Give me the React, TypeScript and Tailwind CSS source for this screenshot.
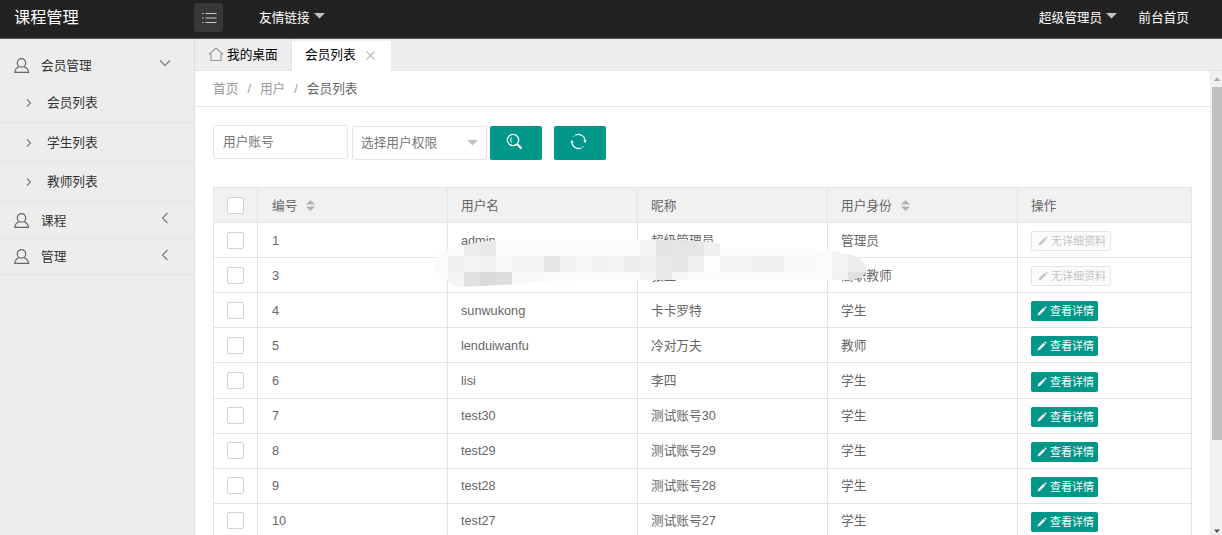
import React from "react";

type Row = { id: number; user: string; nick: string; role: string; disabled?: boolean };

const rows: Row[] = [
  { id: 1, user: "admin", nick: "超级管理员", role: "管理员", disabled: true },
  { id: 3, user: "", nick: "张三", role: "高职教师", disabled: true },
  { id: 4, user: "sunwukong", nick: "卡卡罗特", role: "学生" },
  { id: 5, user: "lenduiwanfu", nick: "冷对万夫", role: "教师" },
  { id: 6, user: "lisi", nick: "李四", role: "学生" },
  { id: 7, user: "test30", nick: "测试账号30", role: "学生" },
  { id: 8, user: "test29", nick: "测试账号29", role: "学生" },
  { id: 9, user: "test28", nick: "测试账号28", role: "学生" },
  { id: 10, user: "test27", nick: "测试账号27", role: "学生" },
];

function UserIcon() {
  return (
    <svg width="16" height="16" viewBox="0 0 16 16" fill="none" stroke="#666" strokeWidth="1.2" className="shrink-0">
      <ellipse cx="7.500" cy="4.900" rx="4.200" ry="4.300" />
      <path d="M5.300 8.500C2.500 9.600 1 11.400.8 14.300H14.500C14.300 11.400 12.500 9.600 9.700 8.500" />
    </svg>
  );
}

function Chevron({ d, className }: { d: string; className?: string }) {
  return (
    <svg width="12" height="12" viewBox="0 0 12 12" fill="none" stroke="#777" strokeWidth="1.1" className={className}>
      <path d={d} />
    </svg>
  );
}

function Caret({ fill }: { fill: string }) {
  return (
    <svg width="11" height="6" viewBox="0 0 11 6" fill={fill}>
      <path d="M0 0H11L5.500 5.500Z" />
    </svg>
  );
}

function Sort() {
  return (
    <svg width="9" height="11" viewBox="0 0 9 11" fill="#b2b2b2" className="ml-[9px]">
      <path d="M0 4.500L4.500 0L9 4.500ZM0 6.500H9L4.500 11Z" />
    </svg>
  );
}

function Pencil() {
  return (
    <svg width="10" height="10" viewBox="0 0 10 10" fill="currentColor" className="mr-[3px] shrink-0">
      <path d="M0.500 9.500L1.300 7L6.600 1.700L8.300 3.400L3 8.700ZM7.200 1.100L7.800.5Q8.300.2 8.800.7L9.400 1.300Q9.800 1.800 9.400 2.300L8.900 2.800Z" />
    </svg>
  );
}

function Check() {
  return <span className="-mt-px block h-[17px] w-[17px] rounded-[2px] border border-[#d2d2d2] bg-white" />;
}

function SubItem({ label, height }: { label: string; height: string }) {
  return (
    <div className={`flex items-center border-b border-[#e3e3e3] pl-[23px] ${height}`}>
      <Chevron d="M4 2.500L7.500 6L4 9.500" />
      <span className="ml-3">{label}</span>
    </div>
  );
}

function Group({ label, height }: { label: string; height: string }) {
  return (
    <div className={`flex items-center border-b border-[#e3e3e3] pl-[14px] pr-[23px] ${height}`}>
      <UserIcon />
      <span className="ml-[11px] flex-1">{label}</span>
      <Chevron d="M8.500 1L3.500 6L8.500 11" className="mb-[5px]" />
    </div>
  );
}

const mosaic: [number, number, number, number, string][] = [
  [430, 235, 440, 60, "#fbfbfb"],
  [448, 256, 16, 16, "#efefef"], [464, 256, 16, 16, "#f5f5f5"], [480, 256, 16, 16, "#f1f1f1"],
  [496, 256, 16, 16, "#fafafa"], [512, 256, 32, 16, "#f3f3f3"], [544, 256, 16, 16, "#e6e6e6"],
  [560, 256, 16, 16, "#f1f1f1"], [576, 256, 16, 16, "#f6f6f6"], [592, 256, 16, 16, "#f1f1f1"],
  [608, 256, 16, 16, "#f4f4f4"], [624, 256, 16, 16, "#eeeeee"], [640, 256, 16, 16, "#f0f0f0"],
  [656, 256, 16, 16, "#e9e9e8"], [672, 256, 16, 16, "#e5e8e6"], [688, 256, 16, 16, "#eeefee"],
  [704, 256, 16, 16, "#fdfdfd"], [720, 256, 32, 16, "#f3f3f3"], [752, 256, 32, 16, "#f0f0f0"],
  [784, 256, 32, 16, "#f9f9f9"], [832, 256, 16, 16, "#f5f5f5"], [848, 256, 20, 16, "#ededed"],
  [448, 272, 16, 16, "#f5f5f3"], [464, 272, 16, 16, "#e1e1e1"], [480, 272, 16, 16, "#dadcda"],
  [496, 272, 16, 16, "#dddddd"], [512, 272, 32, 16, "#f8f8f8"], [640, 272, 16, 16, "#f4f4f4"],
  [656, 272, 16, 16, "#e8e8e6"], [672, 272, 16, 16, "#f6f6f6"], [832, 272, 16, 16, "#f1f1ef"],
  [848, 272, 20, 16, "#e1e1e1"], [464, 240, 16, 16, "#eceeed"], [480, 240, 16, 16, "#e9e9e9"],
  [640, 240, 16, 16, "#f5f5f3"], [656, 240, 16, 16, "#e3e3e3"], [672, 240, 32, 16, "#e4e6e5"],
  [704, 240, 16, 16, "#eff1f0"], [832, 240, 16, 16, "#f4f4f2"], [848, 240, 16, 16, "#eaeaea"],
];

const cell = "flex items-center border-r border-b border-[#e4e4e4] pl-[13px] pt-px";
const idCell = "flex items-center border-r border-b border-[#e4e4e4] pl-[14px] pt-px";

export default function App() {
  return (
    <div className="relative flex h-[535px] w-[1222px] flex-col overflow-hidden bg-white font-['Liberation_Sans','Noto_Sans_CJK_SC',sans-serif] text-[12.700px] leading-[18px] text-[#666]">
      <header className="flex h-[39px] shrink-0 items-center border-b border-[#5a5555] bg-[#222] pb-1 text-white">
        <div className="w-[194px] pl-[14px] text-[16.200px]">课程管理</div>
        <div className="mt-px flex h-[29px] w-[29px] items-center justify-center rounded-[3px] bg-[#383838]">
          <svg width="16" height="12" viewBox="0 0 16 12" fill="none" stroke="#ccc" strokeWidth="1.100">
            <path d="M1 1.500H2.500M1 6H2.500M1 10.500H2.500M4.500 1.500H15.500M4.500 6H15.500M4.500 10.500H15.500" />
          </svg>
        </div>
        <div className="ml-9 flex flex-1 items-center gap-[4px] pt-px"><span>友情链接</span><span className="mb-[3px]"><Caret fill="#c2c2c2" /></span></div>
        <div className="flex items-center gap-1 pt-px"><span>超级管理员</span><span className="mb-[3px]"><Caret fill="#c2c2c2" /></span></div>
        <div className="ml-[21px] mr-[33px] pt-px">前台首页</div>
      </header>
      <div className="flex min-h-0 flex-1">
        <aside className="w-[195px] shrink-0 border-r border-[#dedede] bg-[#ededed] text-[#333]">
          <div className="flex h-[44px] items-center pl-[14px] pr-[23px] pt-[9px]">
            <UserIcon />
            <span className="ml-[11px] flex-1">会员管理</span>
            <Chevron d="M1 3.500L6 8.500L11 3.500" className="mb-[6px]" />
          </div>
          <SubItem label="会员列表" height="h-[40px]" />
          <SubItem label="学生列表" height="h-[39px] pt-px" />
          <SubItem label="教师列表" height="h-[40px] pt-px" />
          <Group label="课程" height="h-[37px] pt-px" />
          <Group label="管理" height="h-[36px] pt-px" />
        </aside>
        <main className="flex min-w-0 flex-1 flex-col">
          <div className="flex h-[32px] shrink-0 border-b border-[#e2e2e2] bg-[#eeeeef] text-black">
            <div className="flex w-[97px] items-center border-r border-[#e2e2e2] pl-[13px] pt-px">
              <svg width="16" height="15" viewBox="0 0 16 15" fill="none" stroke="#999" strokeWidth="1.100" className="mb-[2px]">
                <path d="M1 7.500L8 1L15 7.500M3 6.500V13.500H13V6.500" />
              </svg>
              <span className="ml-[3px]">我的桌面</span>
            </div>
            <div className="mt-[2px] -mb-px flex w-[99px] items-center bg-white pl-[13px]">
              <span className="-mt-[2px]">会员列表</span>
              <svg width="9" height="9" viewBox="0 0 9 9" stroke="#bbb" strokeWidth="1.100" className="mb-px ml-[10px]"><path d="M.5.5L8.500 8.500M8.500.5L.5 8.500" /></svg>
            </div>
          </div>
          <div className="flex min-h-0 flex-1">
            <div className="min-w-0 flex-1 overflow-hidden">
              <div className="flex h-9 items-center border-b border-[#e5e5e5] pl-[18px] text-[#999]">
                <span>首页</span><span className="mx-[9px]">/</span><span>用户</span><span className="mx-[9px]">/</span><span className="text-[#666]">会员列表</span>
              </div>
              <div className="flex h-[80px] items-start pl-[18px] pt-[18px] text-[#757575]">
                <div className="flex h-[34px] w-[135px] items-center rounded-[2px] border border-[#e6e6e6] pl-[9px]">用户账号</div>
                <div className="ml-1 mt-px flex h-[34px] w-[135px] items-center justify-between rounded-[2px] border border-[#e6e6e6] px-2">
                  <span>选择用户权限</span><Caret fill="#c2c2c2" />
                </div>
                <button className="ml-[3px] mt-px flex h-[34px] w-[52px] items-center justify-center rounded-[2px] bg-[#009688]">
                  <svg width="17" height="17" viewBox="0 0 17 17" fill="none" stroke="white" className="mb-[3px] mr-[3px]">
                    <circle cx="7" cy="7" r="5.700" strokeWidth="1.200" />
                    <path d="M5.500 9.500Q3.500 7 5.500 4.500" strokeWidth="1" />
                    <path d="M11 11L12 12" strokeWidth="1.200" /><path d="M12 12L14.800 14.800" strokeWidth="2.400" strokeLinecap="round" />
                  </svg>
                </button>
                <button className="ml-3 mt-px flex h-[34px] w-[52px] items-center justify-center rounded-[2px] bg-[#009688]">
                  <svg width="17" height="17" viewBox="0 0 17 17" fill="none" stroke="white" strokeWidth="1.200" className="mb-[3px] mr-[3px]">
                    <path d="M5.200 2.200A7 7 0 0 1 15.200 8.500M11.800 14.800A7 7 0 0 1 1.800 8.500M3.500 3.500L4 3M13.500 13.500L13 14" />
                    <path d="M13.200 7.500L15.200 10.200L16.600 7.200ZM.4 9.800L1.800 6.800L3.800 9.500Z" fill="white" stroke="none" />
                  </svg>
                </button>
              </div>
              <div className="ml-[18px] grid w-[979px] auto-rows-[35.100px] grid-cols-[44px_190px_190px_190px_190px_174px] border-l border-t border-[#e4e4e4]">
                <div className={`${cell} bg-[#f1f1f1]`}><Check /></div>
                <div className={`${idCell} bg-[#f1f1f1]`}>编号<Sort /></div>
                <div className={`${cell} bg-[#f1f1f1]`}>用户名</div>
                <div className={`${cell} bg-[#f1f1f1]`}>昵称</div>
                <div className={`${cell} bg-[#f1f1f1]`}>用户身份<Sort /></div>
                <div className={`${cell} bg-[#f1f1f1]`}>操作</div>
                {rows.map((r) => (
                  <React.Fragment key={r.id}>
                    <div className={cell}><Check /></div>
                    <div className={idCell}>{r.id}</div>
                    <div className={cell}>{r.user}</div>
                    <div className={cell}>{r.nick}</div>
                    <div className={cell}>{r.role}</div>
                    <div className={cell}>
                      {r.disabled ? (
                        <span className="mt-px flex h-5 w-[80px] items-center whitespace-nowrap rounded-[2px] border border-[#e6e6e6] bg-[#fbfbfb] pl-[6px] text-[11px] text-[#c4c4c4]"><Pencil />无详细资料</span>
                      ) : (
                        <span className="mt-px flex h-5 w-[67px] items-center whitespace-nowrap rounded-[2px] bg-[#009688] pl-[6px] text-[11px] text-white"><Pencil />查看详情</span>
                      )}
                    </div>
                  </React.Fragment>
                ))}
              </div>
            </div>
            <div className="flex w-3 shrink-0 flex-col items-end border-l border-[#ececec] bg-[#f1f1f1]">
              <svg width="10" height="16" viewBox="0 0 10 16" fill="#a3a3a3"><path d="M2 10L5 6.500L8 10Z" /></svg>
              <div className="h-[353px] w-[10px] bg-[#c1c1c1]" />
              <div className="flex-1" />
              <svg width="10" height="7" viewBox="0 0 10 7" fill="#505050"><path d="M2 1.500H8L5 5Z" /></svg>
            </div>
          </div>
        </main>
      </div>
      <svg className="absolute left-[430px] top-[235px]" width="440" height="60" viewBox="430 235 440 60" shapeRendering="crispEdges">
        <clipPath id="smear">
          <path d="M433 264Q433 254 448 250Q465 244 496 240L640 240Q680 239 720 243L720 249L816 249Q866 253 866 268Q866 280 845 280L610 280Q550 280 520 284L462 287Q450 287 448 280Q433 276 433 264Z" />
        </clipPath>
        <g clipPath="url(#smear)">
          {mosaic.map(([x, y, w, h, c], i) => <rect key={i} x={x} y={y} width={w} height={h} fill={c} />)}
        </g>
      </svg>
    </div>
  );
}
